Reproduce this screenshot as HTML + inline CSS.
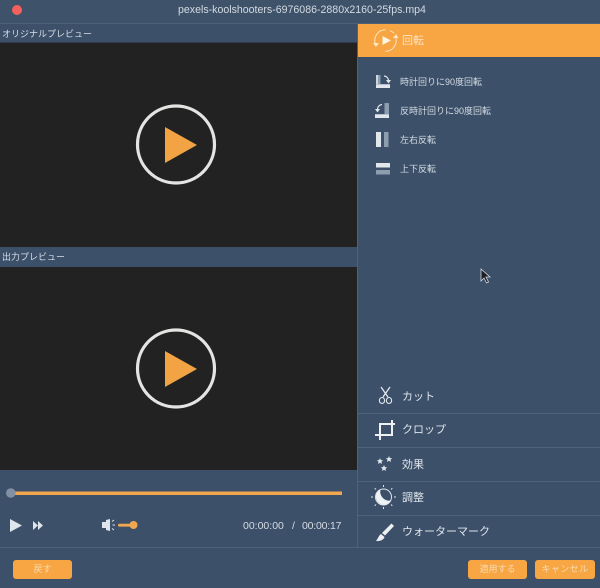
<!DOCTYPE html>
<html lang="ja"><head><meta charset="utf-8">
<style>
html,body{margin:0;padding:0;width:600px;height:588px;overflow:hidden;background:#3c5069}
body{position:relative;font-family:"Liberation Sans","Noto Sans CJK JP",sans-serif;color:#dfe4ea}
#w{position:absolute;left:0;top:0;width:600px;height:588px;filter:blur(.35px)}
.a{position:absolute}
.t{position:absolute;white-space:nowrap;line-height:14px}
.btn{position:absolute;top:560px;height:19px;background:#f7a643;border-radius:3px;color:#f8dcb4;font-size:9px;line-height:19px;text-align:center}
svg{position:absolute;left:0;top:0}
</style></head><body><div id="w">
<div class="a" style="left:0;top:0;width:600px;height:23px;background:#3e5269"></div>
<div class="a" style="left:0;top:23px;width:600px;height:1px;background:#4a5f78"></div>
<div class="t" style="left:178px;top:3px;font-size:10.600px;color:#d3dae2">pexels-koolshooters-6976086-2880x2160-25fps.mp4</div>
<div class="a" style="left:12px;top:5px;width:10px;height:10px;border-radius:50%;background:#f4615c"></div>

<div class="a" style="left:0;top:42px;width:357px;height:1px;background:#2f3b4a"></div>
<div class="a" style="left:0;top:43px;width:357px;height:204px;background:#222222"></div>
<div class="a" style="left:0;top:267px;width:357px;height:203px;background:#222222"></div>
<div class="t" style="left:2px;top:27px;font-size:9px;color:#d8dee5">オリジナルプレビュー</div>
<div class="t" style="left:2px;top:250px;font-size:9px;color:#d8dee5">出力プレビュー</div>

<div class="a" style="left:357px;top:24px;width:1px;height:524px;background:#4d627b"></div>
<div class="a" style="left:358px;top:24px;width:242px;height:33px;background:#f7a643"></div>
<div class="t" style="left:402px;top:34px;font-size:11px;color:#fbe3c4">回転</div>

<div class="t" style="left:400px;top:75px;font-size:9px;color:#d5dce4">時計回りに90度回転</div>
<div class="t" style="left:400px;top:104px;font-size:9px;color:#d5dce4">反時計回りに90度回転</div>
<div class="t" style="left:400px;top:133px;font-size:9px;color:#d5dce4">左右反転</div>
<div class="t" style="left:400px;top:162px;font-size:9px;color:#d5dce4">上下反転</div>

<div class="a" style="left:358px;top:413px;width:242px;height:1px;background:#4d627b"></div>
<div class="a" style="left:358px;top:447px;width:242px;height:1px;background:#4d627b"></div>
<div class="a" style="left:358px;top:481px;width:242px;height:1px;background:#4d627b"></div>
<div class="a" style="left:358px;top:515px;width:242px;height:1px;background:#4d627b"></div>
<div class="a" style="left:0;top:547px;width:600px;height:1px;background:#4d627b"></div>

<div class="t" style="left:402px;top:390px;font-size:11px;color:#dfe4ea">カット</div>
<div class="t" style="left:402px;top:423px;font-size:11px;color:#dfe4ea">クロップ</div>
<div class="t" style="left:402px;top:458px;font-size:11px;color:#dfe4ea">効果</div>
<div class="t" style="left:402px;top:491px;font-size:11px;color:#dfe4ea">調整</div>
<div class="t" style="left:402px;top:525px;font-size:11px;color:#dfe4ea">ウォーターマーク</div>

<div class="t" style="left:243px;top:519px;font-size:10.500px;color:#d5dce4">00:00:00</div>
<div class="t" style="left:292px;top:519px;font-size:10.500px;color:#d5dce4">/</div>
<div class="t" style="left:302px;top:519px;font-size:10.500px;color:#d5dce4;letter-spacing:-.2px">00:00:17</div>

<div class="btn" style="left:13px;width:59px">戻す</div>
<div class="btn" style="left:468px;width:59px">適用する</div>
<div class="btn" style="left:535px;width:60px;letter-spacing:.4px">キャンセル</div>

<svg width="600" height="588" viewBox="0 0 600 588" fill="none">
  <!-- previews -->
  <circle cx="176" cy="144.500" r="38.500" stroke="#e4e4e2" stroke-width="3.200"/>
  <path d="M165 127V163L197 145Z" fill="#f2a444"/>
  <circle cx="176" cy="368.500" r="38.500" stroke="#e4e4e2" stroke-width="3.200"/>
  <path d="M165 351V387L197 369Z" fill="#f2a444"/>

  <!-- rotate header icon -->
  <path d="M375.400 44A10.800 10.800 0 0 1 385.500 29.700" stroke="#fbe6c8" stroke-width="1"/>
  <path d="M395.600 37A10.800 10.800 0 0 1 385.500 51.300" stroke="#fbe6c8" stroke-width="1"/>
  <path d="M390 30.500L394 33" stroke="#fbe6c8" stroke-width="1"/>
  <path d="M373 43L376 47L379 43Z M393 38L396 34L398.500 38Z" fill="#fbe6c8"/>
  <path d="M382.500 36V45L391 40.500Z" fill="#fff4e2"/>

  <!-- rotation icons -->
  <path d="M376 75H380.500V84H390V88H376Z" fill="#8d9db0"/>
  <rect x="376" y="84.500" width="14" height="3.500" fill="#e2e7ed"/>
  <rect x="376" y="75" width="2" height="9" fill="#cfd6df"/>
  <path d="M384 76A5 5 0 0 1 388.500 80" stroke="#e2e7ed" stroke-width="1.200"/>
  <path d="M386 80L391 80L388.500 83.500Z" fill="#e2e7ed"/>
  <path d="M384.500 103H389V118H375V114H384.500Z" fill="#8d9db0"/>
  <rect x="375" y="114.500" width="14" height="3.500" fill="#e2e7ed"/>
  <path d="M382 104.500A5 5 0 0 0 377.500 109" stroke="#e2e7ed" stroke-width="1.200"/>
  <path d="M375 109L380 109L377.500 112.500Z" fill="#e2e7ed"/>
  <rect x="376" y="132" width="5" height="15" fill="#e2e7ed"/>
  <rect x="384" y="132" width="4.500" height="15" fill="#8d9db0"/>
  <rect x="376" y="163" width="14" height="4.500" fill="#e2e7ed"/>
  <rect x="376" y="170" width="14" height="4.500" fill="#8d9db0"/>

  <!-- cursor -->
  <path d="M481 269V281L484 278L486.500 283L488.500 282L486 277L490 277Z" fill="#1c1f24" stroke="#d8dde3" stroke-width=".8"/>

  <!-- scissors -->
  <path d="M381 387L388 397M390 387L383 397" stroke="#e2e7ed" stroke-width="1.300"/>
  <ellipse cx="382" cy="400.500" rx="2.600" ry="3" stroke="#e2e7ed" stroke-width="1.100"/>
  <ellipse cx="389" cy="400.500" rx="2.600" ry="3" stroke="#e2e7ed" stroke-width="1.100"/>
  <!-- crop -->
  <path d="M375 435H392V420M380 440V424H395" stroke="#eef1f4" stroke-width="2"/>
  <!-- stars -->
  <path d="M380 458L380.900 460.100L383.200 460.300L381.500 461.800L382 464L380 462.800L378 464L378.500 461.800L376.800 460.300L379.100 460.100Z" fill="#e2e7ed"/>
  <path d="M389 456L389.900 458.100L392.200 458.300L390.500 459.800L391 462L389 460.800L387 462L387.500 459.800L385.800 458.300L388.100 458.100Z" fill="#e2e7ed"/>
  <path d="M384 465L384.900 467.100L387.200 467.300L385.500 468.800L386 471L384 469.800L382 471L382.500 468.800L380.800 467.300L383.100 467.100Z" fill="#e2e7ed"/>
  <!-- moon/sun -->
  <circle cx="383.500" cy="497" r="8" stroke="#dfe4ea" stroke-width="1"/>
  <path d="M380.500 489.500A8 8 0 1 0 391 500.500A9 9 0 0 1 380.500 489.500Z" fill="#eef1f4"/>
  <path d="M383.500 487V485M391 489.500L392.300 488.200M394 497H396M391 504.500L392.300 505.800M383.500 507V509M376 504.500L374.700 505.800M373 497H371M376 489.500L374.700 488.200" stroke="#dfe4ea" stroke-width="1"/>
  <!-- brush -->
  <path d="M391.500 523.500L394 526L385 535.500L382 533Z" fill="#eef1f4"/>
  <path d="M381 534L384.500 537C384 539.500 380.500 541.500 376 541C378 539 378.500 535.500 381 534Z" fill="#eef1f4"/>

  <!-- timeline -->
  <rect x="10" y="491.500" width="332" height="3.500" fill="#f2a650"/>
  <circle cx="10.800" cy="493" r="4.800" fill="#8290a2"/>
  <path d="M10 519V532L22 525.500Z" fill="#dfe5ec"/>
  <path d="M33 521V530L38 525.500ZM38 521V530L43 525.500Z" fill="#dfe5ec"/>
  <!-- volume -->
  <path d="M102 522H106V520L110 519V531L106 530V528H102Z" fill="#dfe5ec"/>
  <path d="M112 521.500L114 520M112.500 525H115M112 528.500L114 530" stroke="#dfe5ec" stroke-width="1"/>
  <rect x="118" y="523.800" width="15" height="2.800" rx="1.400" fill="#f2a650"/>
  <circle cx="133.500" cy="525" r="4" fill="#f2a650"/>
</svg>
</div></body></html>
